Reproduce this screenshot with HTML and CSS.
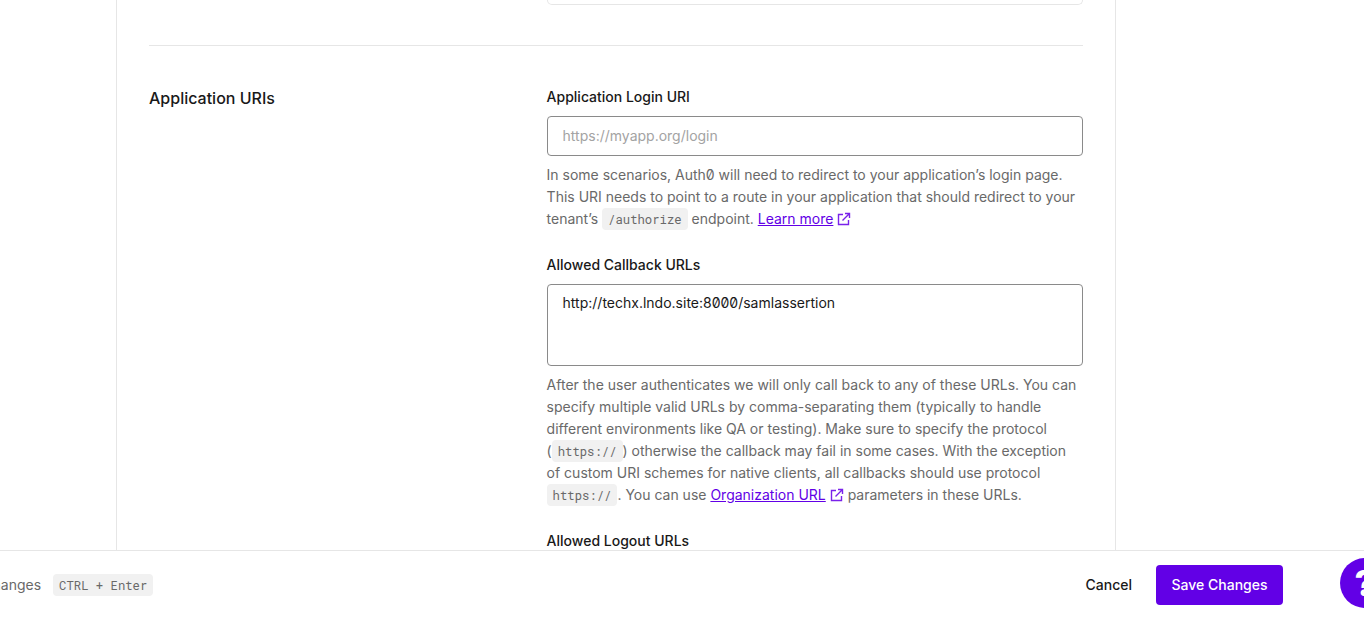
FILE: index.html
```html
<!DOCTYPE html>
<html lang="en">
<head>
<meta charset="utf-8">
<title>Application URIs</title>
<link rel="stylesheet" href="styles.css">
</head>
<body>
<div class="page">
  <main class="main">
    <div class="card">
      <div class="stub-row"><div class="stub"></div></div>
      <hr class="divider">
      <section class="section">
        <h2 class="section-title">Application URIs</h2>
        <div class="fields">
          <div class="field">
            <label class="label">Application Login URI</label>
            <input class="input" type="text" placeholder="https://myapp.org/login">
            <p class="help">In some scenarios, Auth0 will need to redirect to your application’s login page. This URI needs to point to a route in your application that should redirect to your tenant’s <code class="code">/authorize</code> endpoint. <a class="link" href="#">Learn more</a> <svg class="ext" viewBox="0 0 14 14" width="14" height="14"><path d="M6 2.500H1.500v10h10V8M5.500 8.500 12.500 1.500M8 1.500h4.500V6"/></svg></p>
          </div>
          <div class="field">
            <label class="label">Allowed Callback URLs</label>
            <textarea class="textarea">http://techx.lndo.site:8000/samlassertion</textarea>
            <p class="help">After the user authenticates we will only call back to any of these URLs. You can specify multiple valid URLs by comma-separating them (typically to handle different environments like QA or testing). Make sure to specify the protocol (<code class="code">https://</code>) otherwise the callback may fail in some cases. With the exception of custom URI schemes for native clients, all callbacks should use protocol <code class="code">https://</code>. You can use <a class="link" href="#">Organization URL</a> <svg class="ext" viewBox="0 0 14 14" width="14" height="14"><path d="M6 2.500H1.500v10h10V8M5.500 8.500 12.500 1.500M8 1.500h4.500V6"/></svg> parameters in these URLs.</p>
          </div>
          <div class="field">
            <label class="label">Allowed Logout URLs</label>
          </div>
        </div>
      </section>
    </div>
  </main>
  <footer class="footer">
    <div class="hint"><span class="hint-text">Save Changes</span><kbd class="kbd">CTRL + Enter</kbd></div>
    <div class="actions">
      <button class="btn-cancel" type="button">Cancel</button>
      <button class="btn-save" type="button">Save Changes</button>
    </div>
  </footer>
  <div class="help-bubble"><span class="help-mark">?</span></div>
</div>
</body>
</html>
```
FILE: styles.css
```css
* { box-sizing: border-box; }
html, body { margin: 0; height: 100%; overflow: hidden; background: #fff; }
body {
  font-family: Inter, "Liberation Sans", sans-serif;
  font-optical-sizing: none;
  color: #191919;
  font-size: 14px;
}
.page { position: relative; display: flex; flex-direction: column; height: 618px; overflow: hidden; }
.main { flex: 1; min-height: 0; overflow: hidden; padding-left: 116px; }
.card {
  width: 1000px;
  height: 100%;
  border-left: 1px solid #e6e6e6;
  border-right: 1px solid #e6e6e6;
  padding: 0 32px;
}
.stub-row { display: flex; justify-content: flex-end; }
.stub {
  width: 536px;
  height: 5px;
  border: 1px solid #e6e6e6;
  border-top: 0;
  border-radius: 0 0 6px 6px;
}
.divider { border: 0; border-top: 1px solid #e6e6e6; margin: 40px 0 0; }
.section { display: grid; grid-template-columns: 397.6px 1fr; padding-top: 40px; }
.section-title { margin: 0; font-size: 16px; line-height: 24px; font-weight: 500; color: #191919; }
.field { margin-bottom: 24px; }
.label { display: block; font-size: 14px; line-height: 22px; font-weight: 500; margin-bottom: 8px; color: #191919; }
.input, .textarea {
  display: block;
  width: 100%;
  border: 1px solid #8a8a8a;
  border-radius: 4px;
  background: #fff;
  font: 14px/22px Inter, "Liberation Sans", sans-serif;
  font-optical-sizing: none;
  font-feature-settings: "zero" 1;
  color: #191919;
  padding: 7px 15px 9px;
  outline: 0;
  resize: none;
}
.input { height: 40px; }
.input::placeholder { color: #a3a3a3; opacity: 1; }
.textarea { height: 82px; }
.help { margin: 8px 0 0; padding-right: 2px; font-size: 14px; line-height: 22px; color: #696969; font-feature-settings: "zero" 1; }
.code {
  font-family: "Roboto Mono", "DejaVu Sans Mono", "Liberation Mono", monospace;
  font-size: 12.25px;
  line-height: 1;
  color: #696969;
  background: #f1f1f1;
  border-radius: 4px;
  padding: 3px 6px;
}
.link { color: #6200e6; text-decoration: underline; }
.ext { vertical-align: -2px; fill: none; stroke: #7a22ea; stroke-width: 1.400; }
.footer {
  flex: none;
  height: 68px;
  border-top: 1px solid #e6e6e6;
  display: flex;
  align-items: center;
  justify-content: space-between;
  padding-right: 81px;
  background: #fff;
}
.hint { display: flex; align-items: center; gap: 12px; margin-left: -54px; }
.hint-text { font-size: 14px; color: #696969; white-space: nowrap; }
.kbd {
  font-family: "Roboto Mono", "DejaVu Sans Mono", "Liberation Mono", monospace;
  font-size: 12.25px;
  line-height: 22px;
  color: #696969;
  background: #f1f1f1;
  border-radius: 4px;
  padding: 0 6px;
}
.actions { display: flex; align-items: center; gap: 24px; }
.btn-cancel {
  border: 0;
  background: none;
  padding: 0;
  font: 500 14px/20px Inter, "Liberation Sans", sans-serif;
  color: #191919;
}
.btn-save {
  border: 0;
  width: 127px;
  height: 40px;
  border-radius: 4px;
  background: #6200e6;
  color: #fff;
  font: 500 14px/20px Inter, "Liberation Sans", sans-serif;
}
.help-bubble {
  position: absolute;
  left: 1340px;
  top: 558px;
  width: 50px;
  height: 50px;
  border-radius: 50%;
  background: #6200e6;
  display: flex;
  align-items: center;
  justify-content: center;
}
.help-mark { color: #fff; font: 800 36px/1 Inter, "Liberation Sans", sans-serif; }
```
